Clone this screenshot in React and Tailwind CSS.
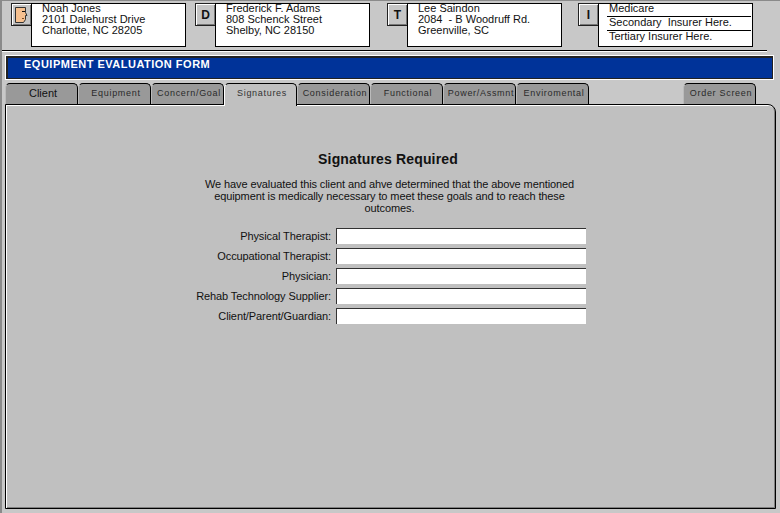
const font = { fontFamily: '"Liberation Sans", Arial, sans-serif' };

function FaceIcon() {
  return (
    <svg width="15" height="18" viewBox="0 0 15 18">
      <path d="M1.5 1.5H11.5V6.5L13 9.5H11.5V13.5L9.5 16.5H1.5Z" fill="#f6c08f" stroke="#333" strokeWidth="1" />
      <path d="M8 5.5h3" stroke="#111" strokeWidth="1" />
      <path d="M8 12.5h2" stroke="#7a4a22" strokeWidth="1" />
    </svg>
  );
}

function IconBox({ children }) {
  return (
    <div className="w-[20px] h-[23px] shrink-0 flex items-center justify-center bg-[#c6c6c6] border border-[#222] border-r-0 shadow-[inset_1px_1px_0_#fff,inset_-1px_-1px_0_#777] text-[12px] font-bold text-[#111]">
      {children}
    </div>
  );
}

function Card({ lines }) {
  return (
    <div className="w-[155px] h-[44px] bg-white border border-black text-[11px] leading-[11px] text-[#111] pl-[10px] overflow-hidden">
      <div className="-mt-[1px]">
        {lines.map((l) => (
          <div key={l} className="h-[11px] whitespace-pre">{l}</div>
        ))}
      </div>
    </div>
  );
}

function Ins() {
  return (
    <div className="w-[155px] h-[44px] bg-white border border-black text-[11px] leading-[11px] text-[#111] pl-[8px] pr-[1px] overflow-hidden">
      <div className="h-[14px] -mt-[1px] pl-[2px] border-b border-black">Medicare</div>
      <div className="h-[14px] pl-[2px] border-b border-black whitespace-pre">Secondary  Insurer Here.</div>
      <div className="h-[14px] pl-[2px]">Tertiary Insurer Here.</div>
    </div>
  );
}

function Tab({ label, active, big }) {
  return (
    <div
      className={`relative w-[73px] shrink-0 rounded-t-[5px] border-t border-r border-black flex items-start justify-center whitespace-nowrap pl-[3px] ${
        active
          ? "bg-[#c0c0c0] border-l border-l-white h-[23px] -mb-[2px] z-10 text-[#333]"
          : "h-[21px] bg-[#999999] border-l border-l-[#bbbbbb] text-[#2a2a2a]"
      } ${big ? "text-[11px] leading-[13px] pt-[3px] text-[#111]" : "text-[9px] leading-[11px] pt-[4px] tracking-[0.7px]"}`}
    >
      {label}
    </div>
  );
}

function Row({ label }) {
  return (
    <div className="flex items-center h-[20px]">
      <div className="w-[325px] text-right text-[11px] tracking-[-0.1px] text-[#111]">{label}:</div>
      <div className="ml-[5px] w-[250px] h-[16px] bg-white border-t border-l border-[#333]" />
    </div>
  );
}

export default function App() {
  const tabs = ["Equipment", "Concern/Goal", "Signatures", "Consideration", "Functional", "Power/Assmnt", "Enviromental"];
  return (
    <div style={font} className="w-[780px] h-[513px] bg-[#c8c8c8] border-t border-l-2 border-[#8a8a8a] overflow-hidden">
      <div className="h-[46px] pt-[2px] flex">
        <div className="ml-[9px] flex"><IconBox><FaceIcon /></IconBox><Card lines={["Noah Jones", "2101 Dalehurst Drive", "Charlotte, NC 28205"]} /></div>
        <div className="ml-[9px] flex"><IconBox>D</IconBox><Card lines={["Frederick F. Adams", "808 Schenck Street", "Shelby, NC 28150"]} /></div>
        <div className="ml-[17px] flex"><IconBox>T</IconBox><Card lines={["Lee Saindon", "2084  - B Woodruff Rd.", "Greenville, SC"]} /></div>
        <div className="ml-[16px] flex"><IconBox>I</IconBox><Ins /></div>
      </div>
      <div className="mt-[3px] w-[765px] h-[2px] border-t border-black bg-white" />
      <div className="ml-[3px] mt-[3px] w-[769px] h-[25px] border border-white bg-[#dddddd]">
        <div className="h-full bg-[#003399] border-2 border-[#222] border-b-1 border-r-1 pl-[16px] pt-[1px] text-white font-bold text-[11px] tracking-[0.5px] leading-[11px]">
          EQUIPMENT EVALUATION FORM
        </div>
      </div>
      <div className="mt-[3px] ml-[3px] flex">
        <Tab label="Client" big />
        {tabs.map((t) => (
          <Tab key={t} label={t} active={t === "Signatures"} />
        ))}
        <div className="ml-[94px]"><Tab label="Order Screen" /></div>
      </div>
      <div className="ml-[3px] w-[771px] h-[405px] bg-[#c0c0c0] border border-black rounded-tr-[8px] shadow-[inset_1px_1px_0_#fff,inset_-1px_-1px_0_#808080]">
        <div className="pt-[46px] pr-[5px] text-center text-[14px] tracking-[0.15px] leading-[16px] font-bold text-[#111]">Signatures Required</div>
        <div className="mt-[11px] w-[383px] ml-[192px] text-center text-[11px] tracking-[-0.1px] leading-[12px] text-[#111]">
          We have evaluated this client and ahve determined that the above mentioned equipment is medically necessary to meet these goals and to reach these outcomes.
        </div>
        <div className="mt-[12px]">
          {["Physical Therapist", "Occupational Therapist", "Physician", "Rehab Technology Supplier", "Client/Parent/Guardian"].map((l) => (
            <Row key={l} label={l} />
          ))}
        </div>
      </div>
    </div>
  );
}
